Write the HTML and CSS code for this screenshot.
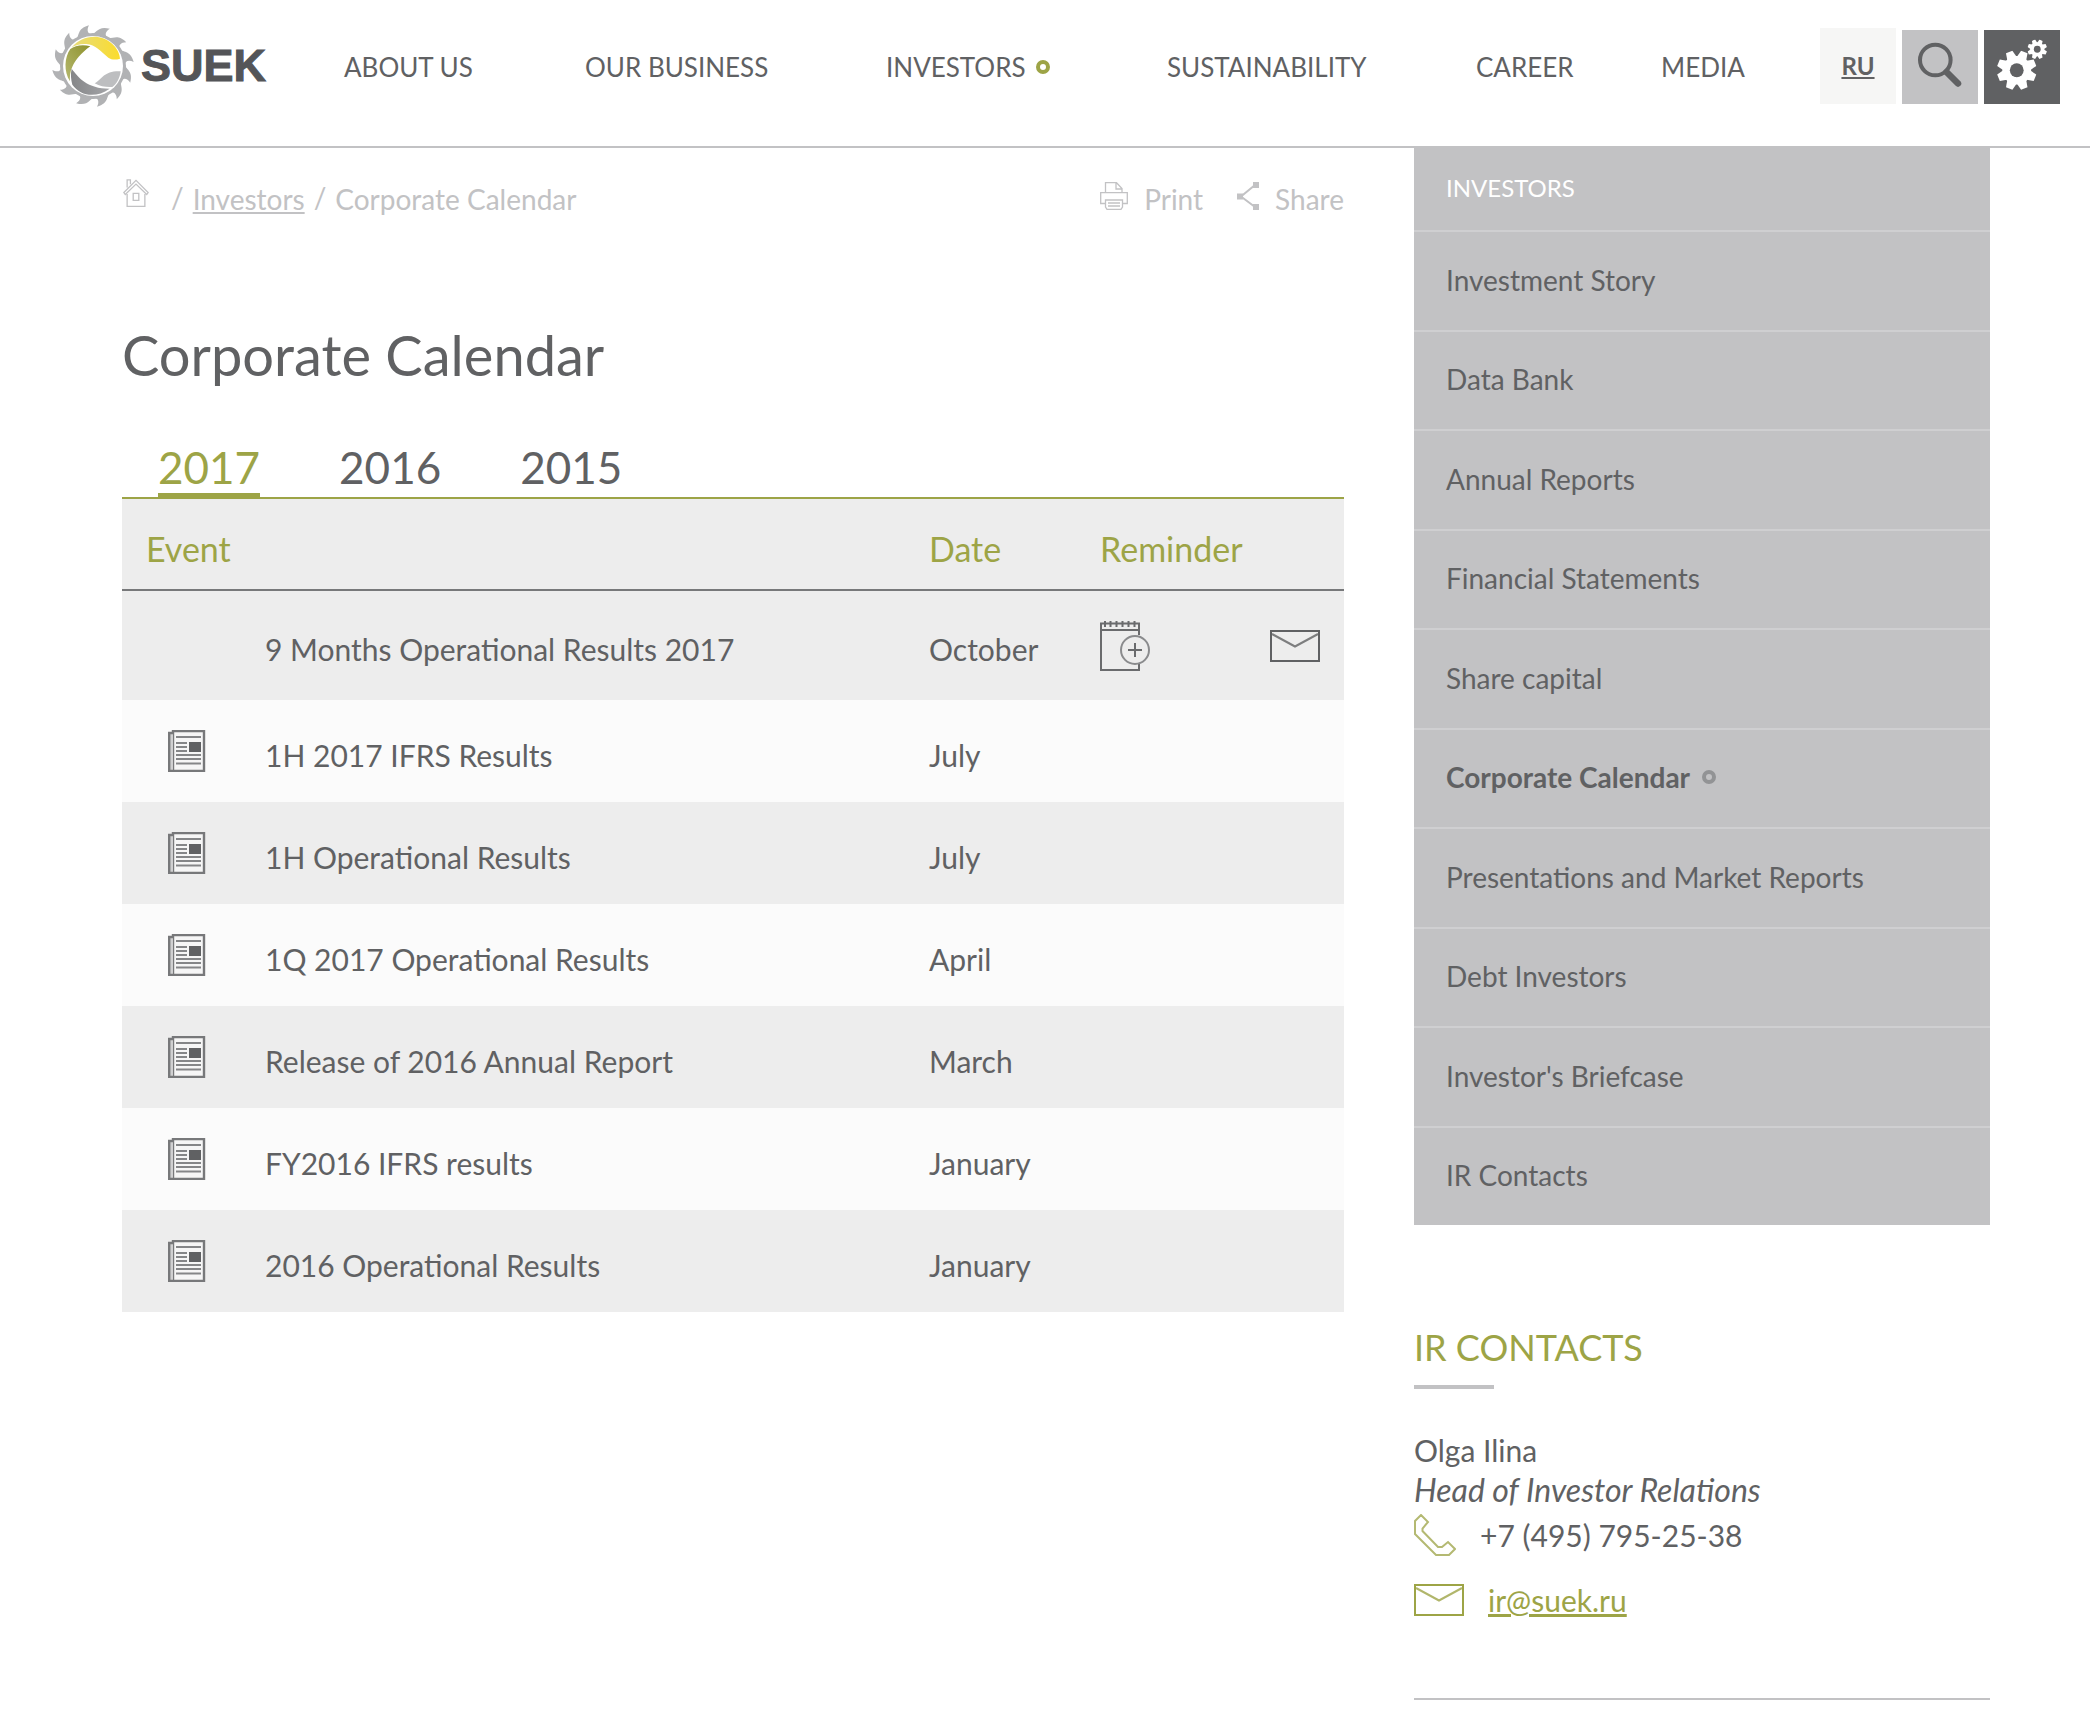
FILE: index.html
```html
<!DOCTYPE html>
<html lang="en">
<head>
<meta charset="utf-8">
<title>Corporate Calendar</title>
<meta name="viewport" content="width=device-width, initial-scale=1">
<link rel="stylesheet" href="styles.css">
</head>
<body>
<!-- Shared icon shapes -->
<svg class="sprite" aria-hidden="true">
  <symbol id="news" viewBox="0 0 38 42">
    <path d="M5 1H36V41H5Z" fill="#f6f6f6" stroke="#77787a" stroke-width="2.400"/>
    <path d="M5 3H1.200V41H5" fill="#d0d0d1" stroke="#77787a" stroke-width="2.400"/>
    <path d="M8 7H33M8 13H19M8 17H19M8 21H19M8 25H33M8 29H33M8 33.500H33" stroke="#858688" stroke-width="2.200"/>
    <path d="M21 12H33V22H21Z" fill="#606163"/>
  </symbol>
  <symbol id="mail" viewBox="0 0 50 32">
    <path d="M1 1H49V31H1Z" fill="none" stroke="currentColor" stroke-width="2"/>
    <path d="M2 4L25 16.500L48 4" fill="none" stroke="currentColor" stroke-width="2" opacity=".8"/>
  </symbol>
  <symbol id="gear" viewBox="-20 -20 40 40">
    <g fill="#fff">
      <path d="M-5 -13L-3.500 -20H3.500L5 -13V13L3.500 20H-3.500L-5 13Z" transform="rotate(22.500)"/>
      <path d="M-5 -13L-3.500 -20H3.500L5 -13V13L3.500 20H-3.500L-5 13Z" transform="rotate(67.500)"/>
      <path d="M-5 -13L-3.500 -20H3.500L5 -13V13L3.500 20H-3.500L-5 13Z" transform="rotate(112.500)"/>
      <path d="M-5 -13L-3.500 -20H3.500L5 -13V13L3.500 20H-3.500L-5 13Z" transform="rotate(157.500)"/>
      <circle r="14.500"/>
    </g>
    <circle r="7" fill="#606163"/>
  </symbol>
</svg>

<header class="header">
  <a class="logo" href="#">
    <svg class="logo-mark" viewBox="16 18 252 252" aria-hidden="true">
      <defs>
        <linearGradient id="yellow" x1="0" x2="1"><stop offset="0" stop-color="#e6dc7c"/><stop offset="1" stop-color="#fbdc2c"/></linearGradient>
        <linearGradient id="olive" x1="1" y1="0" x2="0" y2="1"><stop offset="0" stop-color="#8e922c"/><stop offset="1" stop-color="#b5b870"/></linearGradient>
        <linearGradient id="dark" x1="0" x2="1"><stop offset="0" stop-color="#858688"/><stop offset="1" stop-color="#a4a5a8"/></linearGradient>
        <path id="tooth" d="M-54 -76C-38 -90 -50 -112 -12 -122C-20 -108 -16 -95 -2 -95L2 -80Z"/>
      </defs>
      <g transform="translate(142 144)">
        <g fill="#b1b2b4">
          <use href="#tooth"/>
          <use href="#tooth" transform="rotate(30)"/>
          <use href="#tooth" transform="rotate(60)"/>
          <use href="#tooth" transform="rotate(90)"/>
          <use href="#tooth" transform="rotate(120)"/>
          <use href="#tooth" transform="rotate(150)"/>
          <use href="#tooth" transform="rotate(180)"/>
          <use href="#tooth" transform="rotate(210)"/>
          <use href="#tooth" transform="rotate(240)"/>
          <use href="#tooth" transform="rotate(270)"/>
          <use href="#tooth" transform="rotate(300)"/>
          <use href="#tooth" transform="rotate(330)"/>
          <circle r="99"/>
        </g>
        <circle r="90" fill="#fff"/>
      </g>
      <path d="M78 88C110 50 165 45 200 78C215 92 222 108 223 122C210 126 198 126 188 119C165 100 150 80 122 78C104 77 90 81 78 88Z" fill="url(#yellow)"/>
      <path d="M74 93C88 82 112 78 134 85C105 106 90 126 80 146C73 160 72 176 73 190C54 160 56 118 74 93Z" fill="url(#olive)"/>
      <path d="M78 152C98 178 124 212 192 212C150 242 104 234 80 200C76 184 74 168 78 152Z" fill="url(#dark)"/>
      <path d="M147 196C172 182 174 158 225 160C223 180 213 198 200 207C182 208 164 206 147 196Z" fill="#bdbec0"/>
    </svg>
    <span class="logo-text">SUEK</span>
  </a>
  <nav class="nav" aria-label="Main">
    <a href="#">ABOUT US</a>
    <a href="#">OUR BUSINESS</a>
    <a href="#" class="with-dot">INVESTORS<span class="dot"></span></a>
    <a href="#">SUSTAINABILITY</a>
    <a href="#">CAREER</a>
    <a href="#">MEDIA</a>
  </nav>
  <div class="tools">
    <a class="tool tool-lang" href="#">RU</a>
    <button class="tool tool-search" type="button" aria-label="Search">
      <svg viewBox="0 0 76 74" width="76" height="74" fill="none" stroke="#606163"><circle cx="33.300" cy="30" r="15.300" stroke-width="4"/><path d="M44.500 42L56 53.500" stroke-width="6.500" stroke-linecap="round"/></svg>
    </button>
    <button class="tool tool-settings" type="button" aria-label="Settings">
      <svg viewBox="0 0 76 74" width="76" height="74"><use href="#gear" x="13" y="20.500" width="39.500" height="39.500"/><use href="#gear" x="43.500" y="9.500" width="19.500" height="19.500"/></svg>
    </button>
  </div>
</header>

<div class="page">
  <main class="main">
    <div class="topline">
      <nav class="crumbs" aria-label="Breadcrumb">
        <a class="home" href="#" aria-label="Home">
          <svg viewBox="0 0 28 30" width="28" height="28" fill="none" stroke="#c2c2c4" stroke-width="1.400"><path d="M4.500 16V29.300H23.500V16M4.500 9V1H8V5.500M1 14.500L14 1.500L27 14.500L25.500 16.500L14 5.500L2.500 16.500Z"/><path d="M11 15.500H17V23H11Z"/></svg>
        </a>
        <span class="slash">/</span>
        <a class="crumb-link" href="#">Investors</a>
        <span class="slash">/</span>
        <span>Corporate Calendar</span>
      </nav>
      <div class="actions">
        <a href="#"><svg viewBox="0 0 28 28" width="28" height="28" fill="none" stroke="#c2c2c4" stroke-width="1.300"><path d="M5.500 10.500V.700H16.500L22 6.500V10.500M16 1V7H22M5 21.500H.700V10.700H27.300V21.500H22.500M5.500 18H22.500V25L21 27.300H7L5.500 25ZM8 21H20M8 24H20"/></svg>Print</a>
        <a href="#"><svg viewBox="0 0 22 28" width="22" height="28"><path d="M18 3L4 14.500L18 25" fill="none" stroke="#c2c2c4" stroke-width="2"/><path d="M16 0H22V6H16ZM0 11.500H6V17.500H0ZM16 22H22V28H16Z" fill="#c2c2c4"/></svg>Share</a>
      </div>
    </div>
    <h1 class="title">Corporate Calendar</h1>
    <nav class="tabs" aria-label="Year">
      <a class="tab active" href="#">2017</a>
      <a class="tab" href="#">2016</a>
      <a class="tab" href="#">2015</a>
    </nav>
    <table class="events">
      <colgroup><col class="c-icon"><col><col class="c-date"><col class="c-rem"><col class="c-mail"></colgroup>
      <thead>
        <tr><th colspan="2" class="first">Event</th><th>Date</th><th colspan="2">Reminder</th></tr>
      </thead>
      <tbody>
        <tr class="upcoming">
          <td></td><td class="text">9 Months Operational Results 2017</td><td class="text">October</td>
          <td><a href="#" aria-label="Add to calendar"><svg viewBox="0 0 50 50" width="50" height="50" fill="none" stroke="#6a6b6d" stroke-width="2"><path d="M39 43V49H1V2.500H39V14M1 9H39M5 0V6M10.500 0V6M16.500 0V6M22.500 0V6M28.500 0V6M34.500 0V6"/><circle cx="35" cy="29" r="14" stroke="#8a8b8d"/><path d="M28 29H42M35 22V36"/></svg></a></td>
          <td><a href="#" aria-label="Remind by e-mail"><svg class="mail" width="50" height="32"><use href="#mail"/></svg></a></td>
        </tr>
        <tr><td class="icon"><svg width="38" height="42"><use href="#news"/></svg></td><td class="text">1H 2017 IFRS Results</td><td class="text">July</td><td></td><td></td></tr>
        <tr><td class="icon"><svg width="38" height="42"><use href="#news"/></svg></td><td class="text">1H Operational Results</td><td class="text">July</td><td></td><td></td></tr>
        <tr><td class="icon"><svg width="38" height="42"><use href="#news"/></svg></td><td class="text">1Q 2017 Operational Results</td><td class="text">April</td><td></td><td></td></tr>
        <tr><td class="icon"><svg width="38" height="42"><use href="#news"/></svg></td><td class="text">Release of 2016 Annual Report</td><td class="text">March</td><td></td><td></td></tr>
        <tr><td class="icon"><svg width="38" height="42"><use href="#news"/></svg></td><td class="text">FY2016 IFRS results</td><td class="text">January</td><td></td><td></td></tr>
        <tr><td class="icon"><svg width="38" height="42"><use href="#news"/></svg></td><td class="text">2016 Operational Results</td><td class="text">January</td><td></td><td></td></tr>
      </tbody>
    </table>
  </main>

  <aside class="sidebar">
    <nav class="menu" aria-label="Investors">
      <a class="menu-head" href="#">INVESTORS</a>
      <ul class="menu-list">
        <li><a href="#">Investment Story</a></li>
        <li><a href="#">Data Bank</a></li>
        <li><a href="#">Annual Reports</a></li>
        <li><a href="#">Financial Statements</a></li>
        <li><a href="#">Share capital</a></li>
        <li><a href="#" class="current">Corporate Calendar<span class="dot"></span></a></li>
        <li><a href="#">Presentations and Market Reports</a></li>
        <li><a href="#">Debt Investors</a></li>
        <li><a href="#">Investor's Briefcase</a></li>
        <li><a href="#">IR Contacts</a></li>
      </ul>
    </nav>
    <section class="contacts">
      <h2>IR CONTACTS</h2>
      <p class="name">Olga Ilina</p>
      <p class="role">Head of Investor Relations</p>
      <p class="phone"><svg viewBox="0 0 42 42" width="42" height="42" fill="none" stroke="#b4b972" stroke-width="2" aria-hidden="true"><path d="M7 1L14 8L8.500 14.500V17L24 33H28L34 28L41 35L35 41H22L1 20V7Z"/></svg>+7 (495) 795-25-38</p>
      <p class="email"><svg class="mail" width="50" height="32" aria-hidden="true"><use href="#mail"/></svg><a href="#">ir@suek.ru</a></p>
    </section>
  </aside>
</div>
</body>
</html>
```

FILE: styles.css
```css
* {
  box-sizing: border-box;
}

body {
  margin: 0;
  background: #fff;
  color: #606163;
  font-family: Lato, sans-serif;
  font-size: 30px;
  line-height: 40px;
}

a {
  color: inherit;
  text-decoration: none;
}

svg {
  display: block;
  flex: none;
}

h1, h2, p, ul {
  margin: 0;
  padding: 0;
  font-weight: 400;
}

.sprite {
  display: none;
}

.dot {
  flex: none;
  width: 14px;
  height: 14px;
  border: 4px solid #9da446;
  border-radius: 50%;
}

/* Header */
.header {
  display: flex;
  align-items: center;
  padding: 24px 30px 38px 51px;
  border-bottom: 2px solid #c2c2c4;
}

.logo {
  display: flex;
  align-items: center;
  gap: 6px;
  flex: 0 0 293px;
}

.logo-mark {
  width: 84px;
  height: 84px;
}

.logo-text {
  color: #545558;
  font-family: "Liberation Sans", Arial, sans-serif;
  font-size: 45px;
  font-weight: 700;
  -webkit-text-stroke: 1px #545558;
}

.nav {
  flex: 1;
  display: grid;
  grid-template-columns: 241fr 301fr 281fr 309fr 185fr 159fr;
  padding-top: 2px;
  font-size: 26px;
  white-space: nowrap;
}

.with-dot {
  display: flex;
  align-items: center;
  gap: 10px;
}

.tools {
  display: flex;
  align-items: flex-end;
  gap: 6px;
}

.tool {
  display: flex;
  align-items: center;
  justify-content: center;
  width: 76px;
  height: 74px;
  padding: 0;
  border: 0;
}

.tool-lang {
  height: 76px;
  background: #f6f6f5;
  font-size: 24px;
  font-weight: 700;
  text-decoration: underline;
}

.tool-search {
  background: #c2c2c4;
}

.tool-settings {
  background: #606163;
}

/* Page columns */
.page {
  display: flex;
  align-items: flex-start;
  gap: 70px;
  padding: 0 100px 0 122px;
}

.main {
  flex: 1;
  padding-top: 31px;
}

.topline {
  display: flex;
  justify-content: space-between;
  color: #c2c2c4;
  font-size: 28px;
}

.crumbs {
  display: flex;
  gap: 9px;
}

.home {
  margin-right: 12px;
}

.slash {
  line-height: 36px;
}

.crumb-link {
  text-decoration: underline;
}

.actions {
  display: flex;
  gap: 34px;
}

.actions a {
  display: flex;
  gap: 16px;
}

.actions svg {
  margin-top: 3px;
}

.title {
  margin-top: 100px;
  font-size: 56px;
  line-height: 72px;
}

.tabs {
  display: flex;
  gap: 79px;
  margin-top: 50px;
  padding-left: 36px;
  border-bottom: 2px solid #9da446;
  font-size: 44px;
  line-height: 52px;
}

.tab {
  margin-bottom: -2px;
  border-bottom: 6px solid transparent;
}

.tab.active {
  color: #9da446;
  border-color: #9da446;
}

/* Events table */
.events {
  width: 100%;
  table-layout: fixed;
  border-collapse: separate;
  border-spacing: 0;
}

.c-icon {
  width: 143px;
}

.c-date {
  width: 171px;
}

.c-rem {
  width: 170px;
}

.c-mail {
  width: 74px;
}

.events th {
  height: 92px;
  padding: 10px 0 0;
  background: #ededed;
  border-bottom: 2px solid #77787a;
  color: #9da446;
  font-size: 34px;
  font-weight: 400;
  text-align: left;
}

.events th.first {
  padding-left: 24px;
}

.events td {
  height: 102px;
  padding: 0;
  background: #fbfbfb;
}

.events tr:nth-child(odd) td {
  background: #ededed;
}

.events .upcoming td {
  height: 109px;
}

.events .text {
  padding-top: 7px;
}

.events .icon {
  padding-left: 46px;
}

/* Sidebar */
.sidebar {
  flex: 0 0 576px;
}

.menu {
  background: #c2c2c4;
  font-size: 28px;
}

.menu a {
  display: flex;
  align-items: center;
  gap: 12px;
  height: 100%;
  padding: 0 32px 2px;
}

.menu .menu-head {
  height: 82px;
  color: #fff;
  font-size: 24px;
}

.menu-list {
  display: grid;
  grid-auto-rows: 1fr;
  min-height: 995px;
  list-style: none;
}

.menu-list li {
  border-top: 2px solid #cfcfd1;
}

.menu-list .current {
  font-weight: 700;
}

.menu-list .dot {
  border-color: #929395;
}

.contacts {
  margin-top: 98px;
  padding-bottom: 78px;
  border-bottom: 2px solid #c2c2c4;
}

.contacts h2 {
  margin-bottom: 41px;
  color: #9da446;
  font-size: 36px;
  line-height: 48px;
}

.contacts h2::after {
  content: "";
  display: block;
  width: 80px;
  height: 4px;
  margin-top: 14px;
  background: #c2c2c4;
}

.role {
  font-size: 32px;
  font-style: italic;
}

.phone,
.email {
  display: flex;
  align-items: center;
  gap: 24px;
}

.phone {
  margin-top: 4px;
}

.email {
  margin-top: 24px;
  color: #9da446;
}

.email a {
  text-decoration: underline;
}
```
